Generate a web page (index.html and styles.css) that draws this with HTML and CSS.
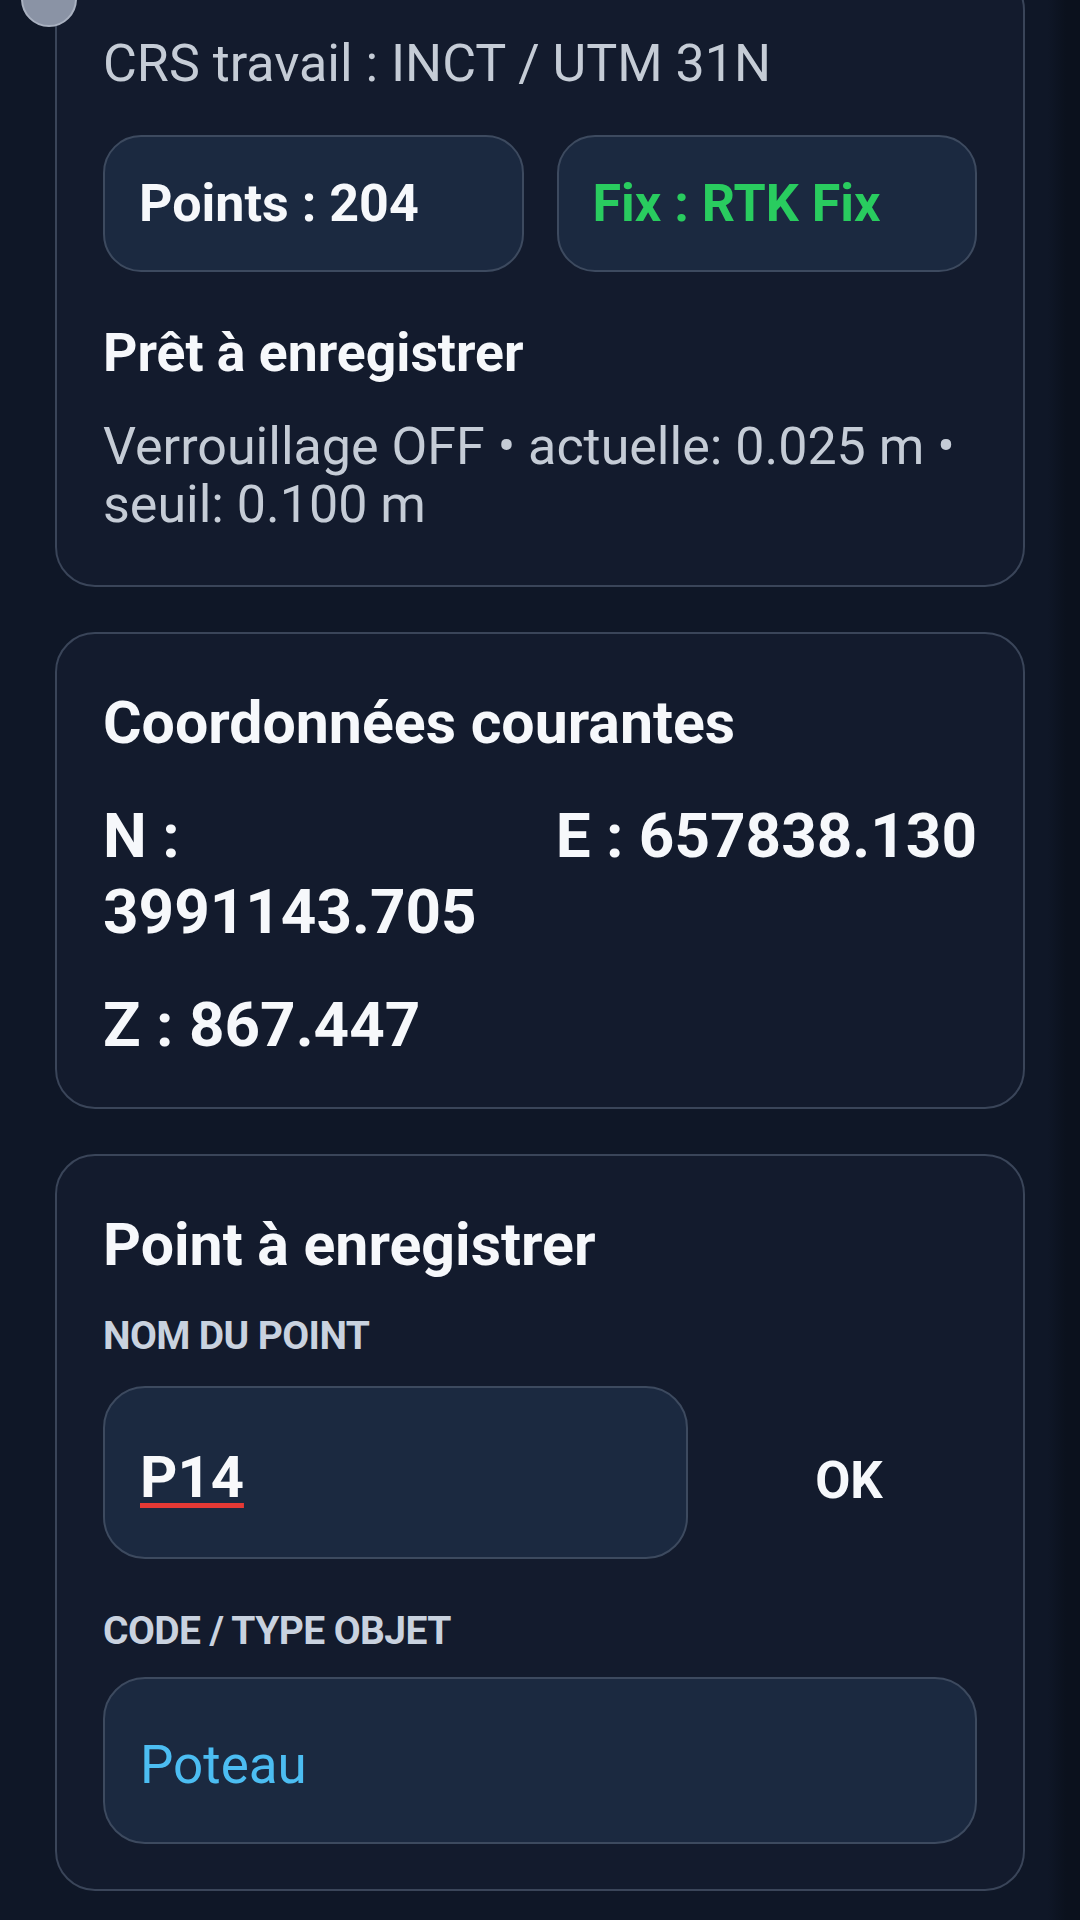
FILE: index.html
```html
<!DOCTYPE html>
<html lang="fr">
<head>
<meta charset="utf-8">
<title>Relevé</title>
<link rel="stylesheet" href="styles.css">
</head>
<body>
<main class="screen">
  <section class="card card-status">
    <span class="knob"></span>
    <p class="muted crs">CRS travail : INCT / UTM 31N</p>
    <div class="chips">
      <div class="chip">Points : 204</div>
      <div class="chip chip-fix">Fix : RTK Fix</div>
    </div>
    <h2 class="title title-status">Prêt à enregistrer</h2>
    <p class="muted desc">Verrouillage OFF • actuelle: 0.025 m • seuil: 0.100 m</p>
  </section>

  <section class="card card-coords">
    <h2 class="title">Coordonnées courantes</h2>
    <div class="coords">
      <div class="coord">N : 3991143.705</div>
      <div class="coord coord-nowrap">E : 657838.130</div>
      <div class="coord">Z : 867.447</div>
    </div>
  </section>

  <section class="card card-point">
    <h2 class="title">Point à enregistrer</h2>
    <div class="label label-name">NOM DU POINT</div>
    <div class="name-row">
      <div class="field field-name"><span class="misspelled">P14</span></div>
      <div class="ok">OK</div>
    </div>
    <div class="label label-code">CODE / TYPE OBJET</div>
    <div class="field field-code"><span class="code-value">Poteau</span></div>
  </section>
</main>
</body>
</html>
```

FILE: styles.css
```css
* {
  box-sizing: border-box;
}

html, body {
  margin: 0;
  padding: 0;
}

body {
  width: 1080px;
  height: 1920px;
  overflow: hidden;
  background: linear-gradient(to right, #0f1727 0, #0f1727 1048px, #0b111d 1066px, #0b111d 100%);
  font-family: Roboto, "Noto Sans", "Liberation Sans", sans-serif;
  color: #f4f6fa;
}

.screen {
  display: flex;
  flex-direction: column;
  gap: 45px;
  padding: 0 55px;
}

.card {
  position: relative;
  background: #131b2d;
  border: 2px solid #3a4559;
  border-radius: 40px;
  padding: 57px 46px 44px;
}

.card-status {
  margin-top: -30px;
  padding-top: 62px;
  padding-bottom: 51px;
}

.card-point {
  padding-bottom: 45px;
}

.knob {
  position: absolute;
  left: -36px;
  top: -1px;
  width: 56px;
  height: 56px;
  border-radius: 50%;
  background: #8a93a5;
  border: 2px solid #a9b1c0;
}

.muted {
  margin: 0;
  color: #c5ccd6;
  font-size: 52px;
  font-weight: 400;
}

.crs {
  line-height: 60px;
}

.chips {
  display: grid;
  grid-template-columns: 1fr 1fr;
  gap: 33px;
  margin-top: 41px;
}

.chip {
  height: 137px;
  display: flex;
  align-items: center;
  padding: 0 34px;
  background: #1b2940;
  border: 2px solid #3d4a5f;
  border-radius: 38px;
  font-size: 52px;
  font-weight: 700;
  color: #f6f8fb;
}

.chip-fix {
  color: #29cc5f;
}

.title {
  margin: 0;
  font-size: 59px;
  line-height: 64px;
  font-weight: 700;
  color: #f6f8fb;
}

.title-status {
  margin-top: 50px;
  font-size: 53.5px;
  line-height: 62px;
}

.desc {
  margin-top: 34px;
  line-height: 58px;
}

.coords {
  display: grid;
  grid-template-columns: 1fr 1fr;
  column-gap: 33px;
  row-gap: 37px;
  margin-top: 43px;
}

.coord {
  font-size: 62px;
  line-height: 76px;
  font-weight: 700;
  color: #f6f8fb;
}

.coord-nowrap {
  white-space: nowrap;
}

.label {
  font-size: 39px;
  line-height: 46px;
  font-weight: 700;
  letter-spacing: -0.6px;
  color: #c9d2df;
}

.label-name {
  margin-top: 36px;
}

.label-code {
  margin-top: 49px;
}

.name-row {
  display: grid;
  grid-template-columns: 585px 1fr;
  gap: 35px;
  align-items: center;
  margin-top: 27px;
}

.field {
  display: flex;
  align-items: center;
  padding: 0 35px;
  background: #1b2940;
  border: 2px solid #3d4a5f;
  border-radius: 42px;
}

.field-name {
  height: 173px;
}

.field-code {
  height: 167px;
  margin-top: 23px;
}

.misspelled {
  position: relative;
  top: 4px;
  font-size: 58px;
  font-weight: 700;
  color: #f8f9fb;
  line-height: 68px;
  text-decoration: underline;
  text-decoration-color: #e53935;
  text-decoration-thickness: 5px;
  text-underline-offset: 6px;
}

.ok {
  position: relative;
  top: 8px;
  text-align: center;
  font-size: 51px;
  font-weight: 700;
  color: #f6f8fb;
  padding-right: 2px;
}

.code-value {
  font-size: 53px;
  font-weight: 400;
  color: #4cbdf2;
  position: relative;
  top: 4px;
}
```
